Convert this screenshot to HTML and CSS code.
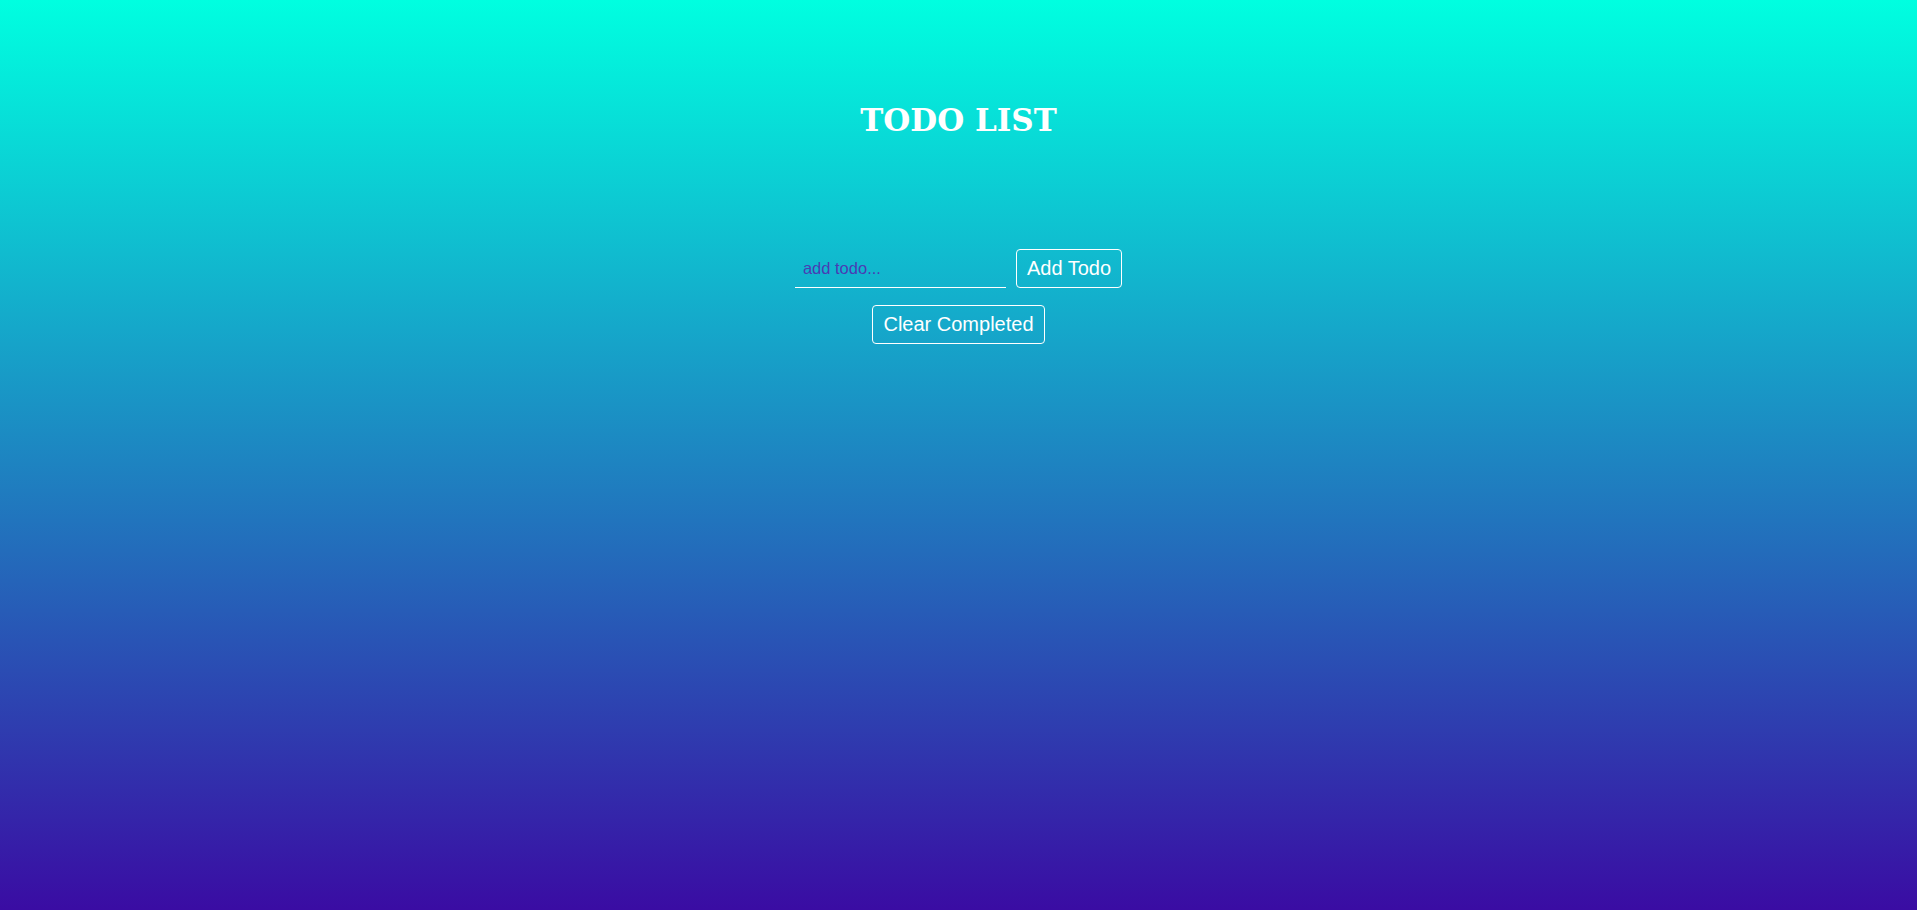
FILE: index.html
```html
<!DOCTYPE html>
<html lang="en">
<head>
<meta charset="utf-8">
<title>Todo List</title>
<link rel="stylesheet" href="styles.css">
</head>
<body>
<main class="app">
  <h1 class="title">TODO LIST</h1>
  <form class="add-row" onsubmit="return false;">
    <input class="todo-input" type="text" placeholder="add todo...">
    <button class="btn" type="submit">Add Todo</button>
  </form>
  <div class="clear-row">
    <button class="btn" type="button">Clear Completed</button>
  </div>
  <ul class="todo-list"></ul>
</main>
</body>
</html>
```
FILE: styles.css
```css
html, body {
  margin: 0;
  padding: 0;
}
body {
  min-height: 100vh;
  background: linear-gradient(to bottom, #00ffe0, #3a0ca3);
  font-family: "Liberation Sans", Arial, sans-serif;
  color: #fff;
}
.app {
  display: flex;
  flex-direction: column;
  align-items: center;
  padding-top: 96px;
}
.title {
  margin: 0;
  font-family: "DejaVu Serif", serif;
  font-weight: bold;
  font-size: 31px;
  line-height: 48px;
  color: #fff;
}
.add-row {
  display: flex;
  gap: 10px;
  margin-top: 105px;
  align-items: flex-end;
}
.todo-input {
  width: 211px;
  height: 39px;
  box-sizing: border-box;
  background: transparent;
  border: none;
  border-bottom: 1px solid #fff;
  padding: 0 8px;
  font-family: "Liberation Sans", Arial, sans-serif;
  font-size: 16.5px;
  color: #fff;
  outline: none;
}
.todo-input::placeholder {
  color: #4a3cb4;
}
.btn {
  background: transparent;
  border: 1px solid #fff;
  border-radius: 4px;
  color: #fff;
  font-family: "Liberation Sans", Arial, sans-serif;
  font-size: 20px;
  padding: 7px 10px;
  line-height: 23px;
  cursor: pointer;
}
.clear-row {
  margin-top: 17px;
}
.todo-list {
  list-style: none;
  margin: 0;
  padding: 0;
}
```
